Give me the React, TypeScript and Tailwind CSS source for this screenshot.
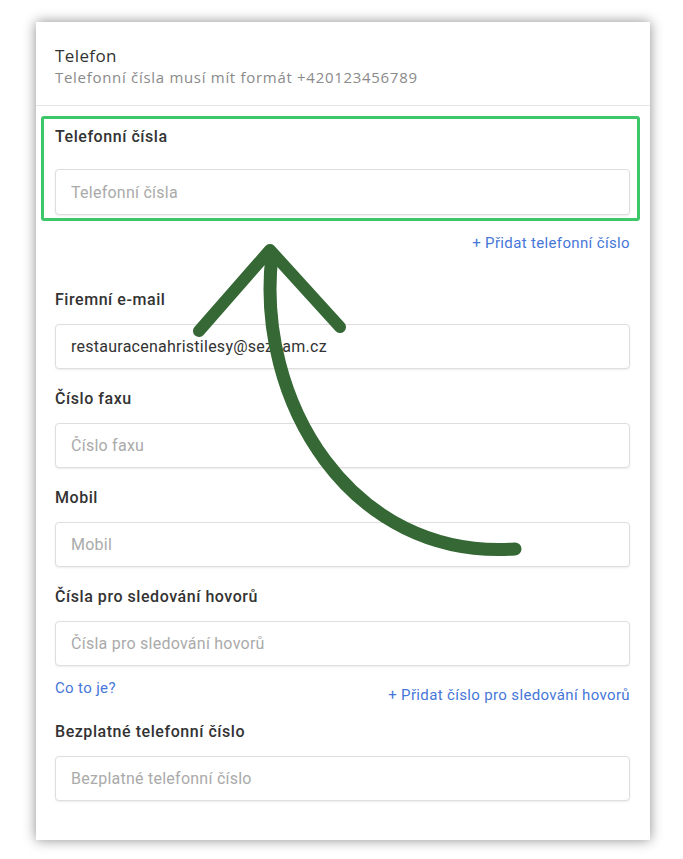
import React from "react";

type FieldProps = {
  label: string;
  placeholder: string;
  value?: string;
};

const inputCls =
  "h-[45px] w-full rounded-[4px] border border-[#dedede] bg-white px-[15px] text-[16px] tracking-[0.25px] text-[#333] shadow-[0_1px_2px_rgba(0,0,0,0.08)] outline-none placeholder:text-[#aaa]";

function Field({ label, placeholder, value }: FieldProps) {
  return (
    <div className="flex flex-col">
      <label className="h-5 text-[16px] leading-5 font-medium tracking-[0.55px] text-[#333]">{label}</label>
      <input className={"mt-[14px] " + inputCls} placeholder={placeholder} defaultValue={value} />
    </div>
  );
}

function Arrow() {
  return (
    <svg
      className="pointer-events-none absolute left-0 top-0"
      width="683"
      height="859"
      viewBox="0 0 683 859"
      fill="none"
    >
      <path
        d="M272 255 C255 400 350 560 515 549"
        stroke="#356835"
        strokeWidth="13"
        strokeLinecap="round"
      />
      <path
        d="M199 331 L270 250 L340 327"
        stroke="#356835"
        strokeWidth="12"
        strokeLinecap="round"
        strokeLinejoin="round"
      />
    </svg>
  );
}

export default function App() {
  return (
    <div className="relative h-[859px] w-[683px] bg-white font-['Roboto',sans-serif]">
      <div className="absolute left-[36px] top-[22px] w-[614px] bg-white shadow-[0_0_12px_rgba(0,0,0,0.45)]">
        {/* header */}
        <div className="border-b border-[#e6e6e6] px-[19px] pb-[19px] pt-[24px] font-['Open_Sans',sans-serif]">
          <h2 className="text-[17px] leading-5 tracking-[0.4px] text-[#333]">Telefon</h2>
          <p className="mt-[2px] text-[15px] leading-[18px] tracking-[0.7px] text-[#8a8a8a]">
            Telefonní čísla musí mít formát +420123456789
          </p>
        </div>

        <div className="pl-[19px] pr-[20px] pb-[39px]">
          {/* highlighted phone field */}
          <div className="-ml-[14px] -mr-[10px] mt-[10px] rounded-[3px] border-[3px] border-[#3ec76a] pb-[3px] pl-[11px] pr-[7px] pt-[8px]">
            <label className="block h-5 text-[16px] leading-5 font-medium tracking-[0.55px] text-[#333]">Telefonní čísla</label>
            <input className={"mt-[22px] !h-[46px] " + inputCls} placeholder="Telefonní čísla" />
          </div>
          <div className="mt-[12px] flex justify-end">
            <a className="text-[15px] leading-5 tracking-[0.35px] text-[#4677d8]">+ Přidat telefonní číslo</a>
          </div>

          <div className="mt-[37px] flex flex-col gap-[20px]">
            <Field label="Firemní e-mail" placeholder="Firemní e-mail" value="restauracenahristilesy@seznam.cz" />
            <Field label="Číslo faxu" placeholder="Číslo faxu" />
            <Field label="Mobil" placeholder="Mobil" />
            <Field label="Čísla pro sledování hovorů" placeholder="Čísla pro sledování hovorů" />
          </div>

          <div className="mt-[12px] flex items-start justify-between">
            <a className="text-[15px] leading-5 tracking-[0.35px] text-[#4677d8]">Co to je?</a>
            <a className="mt-[7px] text-[15px] leading-5 tracking-[0.35px] text-[#4677d8]">+ Přidat číslo pro sledování hovorů</a>
          </div>

          <div className="mt-[17px]">
            <Field label="Bezplatné telefonní číslo" placeholder="Bezplatné telefonní číslo" />
          </div>
        </div>
      </div>
      <Arrow />
    </div>
  );
}
